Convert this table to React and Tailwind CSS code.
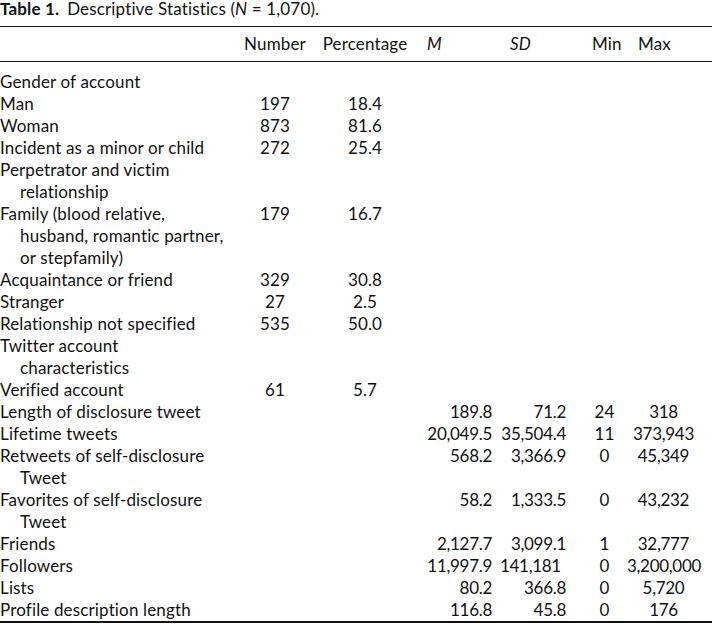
const rows = [
  { label: ['Gender of account'] },
  { label: ['Man'], n: '197', p: '18.4' },
  { label: ['Woman'], n: '873', p: '81.6' },
  { label: ['Incident as a minor or child'], n: '272', p: '25.4' },
  { label: ['Perpetrator and victim', 'relationship'] },
  { label: ['Family (blood relative,', 'husband, romantic partner,', 'or stepfamily)'], n: '179', p: '16.7' },
  { label: ['Acquaintance or friend'], n: '329', p: '30.8' },
  { label: ['Stranger'], n: '27', p: '2.5' },
  { label: ['Relationship not specified'], n: '535', p: '50.0' },
  { label: ['Twitter account', 'characteristics'] },
  { label: ['Verified account'], n: '61', p: '5.7' },
  { label: ['Length of disclosure tweet'], m: '189.8', sd: '71.2', min: '24', max: '318' },
  { label: ['Lifetime tweets'], m: '20,049.5', sd: '35,504.4', min: '11', max: '373,943' },
  { label: ['Retweets of self-disclosure', 'Tweet'], m: '568.2', sd: '3,366.9', min: '0', max: '45,349' },
  { label: ['Favorites of self-disclosure', 'Tweet'], m: '58.2', sd: '1,333.5', min: '0', max: '43,232' },
  { label: ['Friends'], m: '2,127.7', sd: '3,099.1', min: '1', max: '32,777' },
  { label: ['Followers'], m: '11,997.9', sd: '141,181', sdInt: true, min: '0', max: '3,200,000' },
  { label: ['Lists'], m: '80.2', sd: '366.8', min: '0', max: '5,720' },
  { label: ['Profile description length'], m: '116.8', sd: '45.8', min: '0', max: '176' },
]

const cols = 'grid grid-cols-[240px_70px_110px_80px_80px_45px_75px]'

export default function App() {
  return (
    <div className="w-[712px] h-[626px] bg-white text-[#111] text-[17px] tracking-[0.15px] font-['Lato',sans-serif]">
      <div className="h-[26px] leading-[17px]">
        <span className="font-bold">Table 1.</span>
        <span className="ml-[8px]">
          Descriptive Statistics (<i>N</i> = 1,070).
        </span>
      </div>

      <div className="border-t border-[#111]">
        <div className={`${cols} leading-[22px] pt-[6px] pb-[6px] border-b-[1.5px] border-[#111]`}>
          <div />
          <div className="text-center">Number</div>
          <div className="text-center">Percentage</div>
          <div className="pl-[7px] italic">M</div>
          <div className="pl-[10px] italic">SD</div>
          <div className="pl-[12px]">Min</div>
          <div className="pl-[13px]">Max</div>
        </div>

        <div className="pt-[9px] border-b-2 border-[#111] leading-[22px]">
          {rows.map((r, i) => (
            <div key={i} className={cols}>
              <div className="whitespace-nowrap">
                {r.label.map((l, j) => (
                  <div key={j} className={j > 0 ? 'pl-[20px]' : ''}>{l}</div>
                ))}
              </div>
              <div className="text-center">{r.n}</div>
              <div className="text-center">{r.p}</div>
              <div className="text-right pr-[8px] whitespace-nowrap tracking-[-0.3px]">{r.m}</div>
              <div className={`text-right whitespace-nowrap tracking-[-0.3px] ${r.sdInt ? 'pr-[20px]' : 'pr-[14px]'}`}>{r.sd}</div>
              <div className="text-center pl-[4px]">{r.min}</div>
              <div className="text-center pl-[2px] whitespace-nowrap tracking-[-0.3px]">{r.max}</div>
            </div>
          ))}
        </div>
      </div>
    </div>
  )
}
